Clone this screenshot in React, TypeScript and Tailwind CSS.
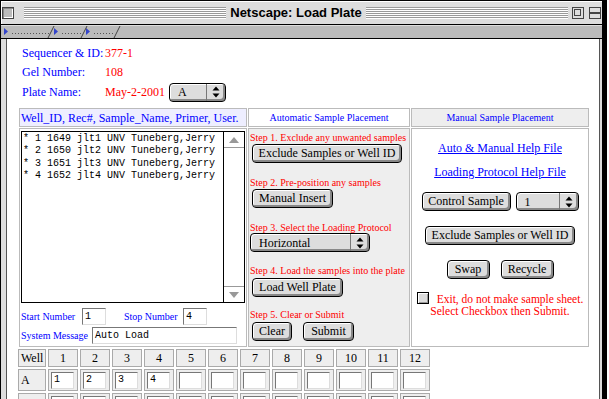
import type { ReactNode } from 'react'

const samples = [
  '* 1 1649 jlt1 UNV Tuneberg,Jerry',
  '* 2 1650 jlt2 UNV Tuneberg,Jerry',
  '* 3 1651 jlt3 UNV Tuneberg,Jerry',
  '* 4 1652 jlt4 UNV Tuneberg,Jerry',
]

const columns = ['1', '2', '3', '4', '5', '6', '7', '8', '9', '10', '11', '12']

function Arrows() {
  return (
    <svg width="8" height="12" viewBox="0 0 8 12">
      <path d="M4 0.5L7.5 4.5H0.5Z M0.5 7.5H7.5L4 11.5Z" fill="#000" />
    </svg>
  )
}

function MacButton({ children, className = '' }: { children: ReactNode; className?: string }) {
  return (
    <button
      className={`flex h-[19px] items-center justify-center rounded-[4px] border border-black bg-[#dddddd] pb-[1px] text-[12px] leading-none text-black shadow-[inset_1px_1px_0_#ffffff,inset_-2px_-2px_0_#888888] ${className}`}
    >
      {children}
    </button>
  )
}

function MacSelect({ value, className = '' }: { value: string; className?: string }) {
  return (
    <div
      className={`flex h-[19px] rounded-[4px] border border-black bg-[#dddddd] shadow-[inset_1px_1px_0_#ffffff,inset_-2px_-2px_0_#888888] ${className}`}
    >
      <span className="flex flex-1 items-center pl-[8px] text-[12px] leading-none text-black">{value}</span>
      <span className="flex w-[19px] items-center justify-center border-l border-[#777777]">
        <Arrows />
      </span>
    </div>
  )
}

function TextBox({ value = '', className = '' }: { value?: string; className?: string }) {
  return (
    <div
      className={`flex items-center border border-t-[#777777] border-l-[#777777] border-r-[#dddddd] border-b-[#dddddd] bg-white pl-[2px] font-['Liberation_Mono',monospace] text-[10px] leading-none text-black ${className}`}
    >
      {value}
    </div>
  )
}

function TitleBar() {
  return (
    <div className="flex h-[24px] items-center border-b border-black bg-[#dddddd] shadow-[inset_1px_1px_0_#ffffff]">
      <div className="ml-[1px] h-[12px] w-[12px] border border-[#444444] bg-[#bbbbbb] shadow-[inset_1px_1px_0_#888888,inset_-1px_-1px_0_#ffffff]" />
      <div className="ml-[10px] h-[12px] flex-1 bg-[repeating-linear-gradient(to_bottom,#999999_0px,#999999_1px,#ffffff_1px,#ffffff_2px)]" />
      <span className="px-[4px] font-['Liberation_Sans',sans-serif] text-[13px] font-bold leading-none text-black">
        Netscape: Load Plate
      </span>
      <div className="h-[12px] flex-1 bg-[repeating-linear-gradient(to_bottom,#999999_0px,#999999_1px,#ffffff_1px,#ffffff_2px)]" />
      <div className="ml-[4px] h-[12px] w-[12px] border border-[#444444] bg-[#dddddd] p-[1px]">
        <div className="h-[7px] w-[7px] border border-[#444444]" />
      </div>
      <div className="ml-[5px] mr-[1px] flex h-[12px] w-[12px] flex-col justify-center border border-[#444444] bg-[#dddddd]">
        <div className="h-[2px] border-y border-[#444444]" />
      </div>
    </div>
  )
}

function TabStrip() {
  return (
    <div className="h-[14px] border-b border-black bg-[#bbbbbb] shadow-[inset_0_1px_0_#dddddd]">
      <svg width="140" height="13" viewBox="0 0 140 13">
        <path d="M3 3L7 6.5L3 10Z M53 3L57 6.5L53 10Z M85 3L89 6.5L85 10Z" fill="#3344cc" />
        <path d="M11 8.5H48 M61 8.5H80 M93 8.5H113" stroke="#555555" strokeDasharray="1 2" />
        <path d="M47 13L53 1 M80 13L86 1 M113 13L119 1" stroke="#444444" />
      </svg>
    </div>
  )
}

export default function App() {
  return (
    <div className="h-[399px] w-[609px] overflow-hidden bg-white font-['Liberation_Serif',serif]">
      <div className="flex h-[399px] w-[607px] flex-col border-l border-t border-r-[5px] border-black bg-[#dddddd]">
        <TitleBar />
        <TabStrip />
        <div className="flex min-h-0 flex-1">
          <div className="w-[6px] border-r border-[#555555] bg-[#dddddd]" />
          <main className="flex-1 bg-white pt-[4px]">
            <div className="grid grid-cols-[83px_auto] grid-rows-[19px_19px_22px] pl-[15px] text-[12px] leading-none">
              <div className="flex items-center text-[#0000ff]">Sequencer &amp; ID:</div>
              <div className="flex items-center text-[#ff0000]">377-1</div>
              <div className="flex items-center text-[#0000ff]">Gel Number:</div>
              <div className="flex items-center text-[#ff0000]">108</div>
              <div className="flex items-center text-[#0000ff]">Plate Name:</div>
              <div className="flex items-center text-[#ff0000]">
                May-2-2001
                <MacSelect value="A" className="ml-[4px] w-[57px]" />
              </div>
            </div>

            <div className="ml-[12px] mt-[5px] grid w-fit grid-cols-[228px_162px_178px] grid-rows-[19px_219px] gap-[1px]">
              <div className="flex items-center border border-[#bbbbbb] bg-[#eeeeff] pl-[1px] text-[12px] leading-none text-[#0000ff]">
                Well_ID, Rec#, Sample_Name, Primer, User.
              </div>
              <div className="flex items-center justify-center border border-[#bbbbbb] bg-white text-[10px] leading-none text-[#0000ff]">
                Automatic Sample Placement
              </div>
              <div className="flex items-center justify-center border border-[#bbbbbb] bg-[#eeeeee] text-[10px] leading-none text-[#0000ff]">
                Manual Sample Placement
              </div>

              <div className="flex flex-col border border-[#bbbbbb] bg-white">
                <div className="ml-[1px] mt-[2px] flex h-[172px] w-[224px] border border-black">
                  <div className="flex-1 pl-[1px] pt-[1px] font-['Liberation_Mono',monospace] text-[10px] leading-[12.3px] text-black">
                    {samples.map((s) => (
                      <div key={s} className="whitespace-pre">
                        {s}
                      </div>
                    ))}
                  </div>
                  <div className="flex w-[21px] flex-col justify-between border-l border-black">
                    <div className="flex h-[16px] items-center justify-center border-b border-[#999999]">
                      <svg width="10" height="6" viewBox="0 0 10 6">
                        <path d="M5 0L10 6H0Z" fill="#999999" />
                      </svg>
                    </div>
                    <div className="flex h-[16px] items-center justify-center border-t border-[#999999]">
                      <svg width="10" height="6" viewBox="0 0 10 6">
                        <path d="M0 0H10L5 6Z" fill="#999999" />
                      </svg>
                    </div>
                  </div>
                </div>
                <div className="mt-[5px] flex items-center pl-[1px] text-[10px] leading-none text-[#0000ff]">
                  <span className="w-[61px]">Start Number</span>
                  <TextBox value="1" className="h-[17px] w-[24px]" />
                  <span className="ml-[18px] w-[59px]">Stop Number</span>
                  <TextBox value="4" className="h-[17px] w-[24px]" />
                </div>
                <div className="mt-[2px] flex items-center pl-[1px] text-[10px] leading-none text-[#0000ff]">
                  <span className="w-[71px]">System Message</span>
                  <TextBox value="Auto Load" className="h-[17px] w-[145px]" />
                </div>
              </div>

              <div className="flex flex-col border border-[#bbbbbb] bg-[#eeeeee] pl-[1px] text-[10px] text-[#ff0000]">
                <div className="mt-[3px] leading-[12px]">Step 1. Exclude any unwanted samples</div>
                <MacButton className="ml-[2px] w-[150px]">Exclude Samples or Well ID</MacButton>
                <div className="mt-[14px] leading-[12px]">Step 2. Pre-position any samples</div>
                <MacButton className="ml-[2px] w-[81px]">Manual Insert</MacButton>
                <div className="mt-[14px] leading-[11px]">Step 3. Select the Loading Protocol</div>
                <MacSelect value="Horizontal" className="w-[120px]" />
                <div className="mt-[13px] leading-[12px]">Step 4. Load the samples into the plate</div>
                <MacButton className="ml-[2px] mt-[1px] w-[91px]">Load Well Plate</MacButton>
                <div className="mt-[12px] leading-[12px]">Step 5. Clear or Submit</div>
                <div className="ml-[2px] mt-[1px] flex gap-[11px]">
                  <MacButton className="w-[40px]">Clear</MacButton>
                  <MacButton className="w-[51px]">Submit</MacButton>
                </div>
              </div>

              <div className="flex flex-col items-center border border-[#bbbbbb] bg-white text-[12px]">
                <a className="mt-[12px] leading-[14px] text-[#0000ff] underline">Auto &amp; Manual Help File</a>
                <a className="mt-[10px] leading-[14px] text-[#0000ff] underline">Loading Protocol Help File</a>
                <div className="mt-[13px] flex gap-[5px]">
                  <MacButton className="w-[89px]">Control Sample</MacButton>
                  <MacSelect value="1" className="w-[63px]" />
                </div>
                <MacButton className="mt-[15px] w-[150px]">Exclude Samples or Well ID</MacButton>
                <div className="mt-[15px] flex gap-[11px]">
                  <MacButton className="w-[43px]">Swap</MacButton>
                  <MacButton className="w-[53px]">Recycle</MacButton>
                </div>
                <p className="mt-[13px] text-center text-[11.5px] leading-[12px] text-[#ff0000]">
                  <span className="mr-[8px] inline-block h-[12px] w-[12px] border border-black bg-[#dddddd] align-[-1px] shadow-[inset_1px_1px_0_#ffffff,inset_-1px_-1px_0_#999999]" />
                  Exit, do not make sample sheet.
                  <br />
                  Select Checkbox then Submit.
                </p>
              </div>
            </div>

            <div className="ml-[11px] mt-[2px] grid w-fit grid-cols-[28px_repeat(12,30px)] grid-rows-[18px_22px_22px] gap-[2px] text-[12px] leading-none text-black">
              <div className="flex items-center border border-[#aaaaaa] bg-[#eeeeee] pl-[2px]">Well</div>
              {columns.map((c) => (
                <div key={c} className="flex items-center justify-center border border-[#aaaaaa] bg-[#eeeeee]">
                  {c}
                </div>
              ))}
              <div className="flex items-center border border-[#aaaaaa] bg-[#eeeeee] pl-[2px]">A</div>
              {columns.map((c, i) => (
                <div key={c} className="flex items-center border border-[#aaaaaa] bg-[#eeeeee] pl-[2px]">
                  <TextBox value={i < 4 ? String(i + 1) : ''} className="h-[17px] w-[23px]" />
                </div>
              ))}
              <div className="border border-[#aaaaaa] bg-[#eeeeee]" />
              {columns.map((c) => (
                <div key={c} className="flex items-center border border-[#aaaaaa] bg-[#eeeeee] pl-[2px]">
                  <TextBox className="h-[17px] w-[23px]" />
                </div>
              ))}
            </div>
          </main>
          <div className="w-[3px] border-l border-[#555555] bg-[#dddddd]" />
        </div>
      </div>
    </div>
  )
}
